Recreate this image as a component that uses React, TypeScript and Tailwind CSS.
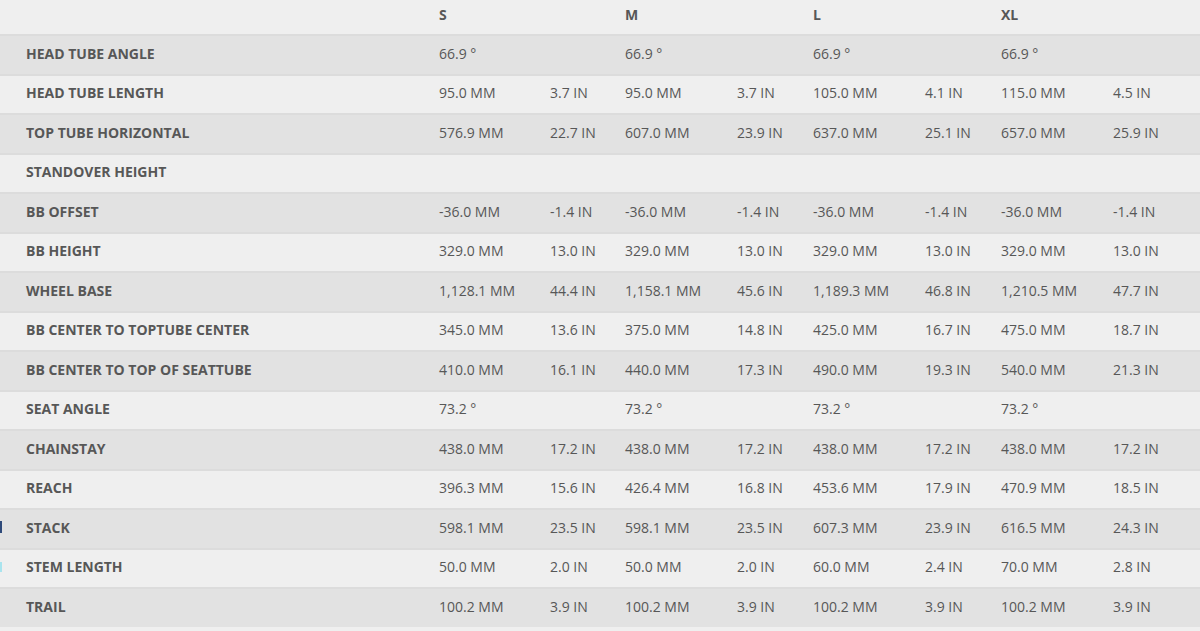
import React from 'react';

type Row = { label: string; values: (string | [string, string])[] };

const rows: Row[] = [
  { label: 'HEAD TUBE ANGLE', values: ['66.9 °', '66.9 °', '66.9 °', '66.9 °'] },
  { label: 'HEAD TUBE LENGTH', values: [['95.0 MM', '3.7 IN'], ['95.0 MM', '3.7 IN'], ['105.0 MM', '4.1 IN'], ['115.0 MM', '4.5 IN']] },
  { label: 'TOP TUBE HORIZONTAL', values: [['576.9 MM', '22.7 IN'], ['607.0 MM', '23.9 IN'], ['637.0 MM', '25.1 IN'], ['657.0 MM', '25.9 IN']] },
  { label: 'STANDOVER HEIGHT', values: ['', '', '', ''] },
  { label: 'BB OFFSET', values: [['-36.0 MM', '-1.4 IN'], ['-36.0 MM', '-1.4 IN'], ['-36.0 MM', '-1.4 IN'], ['-36.0 MM', '-1.4 IN']] },
  { label: 'BB HEIGHT', values: [['329.0 MM', '13.0 IN'], ['329.0 MM', '13.0 IN'], ['329.0 MM', '13.0 IN'], ['329.0 MM', '13.0 IN']] },
  { label: 'WHEEL BASE', values: [['1,128.1 MM', '44.4 IN'], ['1,158.1 MM', '45.6 IN'], ['1,189.3 MM', '46.8 IN'], ['1,210.5 MM', '47.7 IN']] },
  { label: 'BB CENTER TO TOPTUBE CENTER', values: [['345.0 MM', '13.6 IN'], ['375.0 MM', '14.8 IN'], ['425.0 MM', '16.7 IN'], ['475.0 MM', '18.7 IN']] },
  { label: 'BB CENTER TO TOP OF SEATTUBE', values: [['410.0 MM', '16.1 IN'], ['440.0 MM', '17.3 IN'], ['490.0 MM', '19.3 IN'], ['540.0 MM', '21.3 IN']] },
  { label: 'SEAT ANGLE', values: ['73.2 °', '73.2 °', '73.2 °', '73.2 °'] },
  { label: 'CHAINSTAY', values: [['438.0 MM', '17.2 IN'], ['438.0 MM', '17.2 IN'], ['438.0 MM', '17.2 IN'], ['438.0 MM', '17.2 IN']] },
  { label: 'REACH', values: [['396.3 MM', '15.6 IN'], ['426.4 MM', '16.8 IN'], ['453.6 MM', '17.9 IN'], ['470.9 MM', '18.5 IN']] },
  { label: 'STACK', values: [['598.1 MM', '23.5 IN'], ['598.1 MM', '23.5 IN'], ['607.3 MM', '23.9 IN'], ['616.5 MM', '24.3 IN']] },
  { label: 'STEM LENGTH', values: [['50.0 MM', '2.0 IN'], ['50.0 MM', '2.0 IN'], ['60.0 MM', '2.4 IN'], ['70.0 MM', '2.8 IN']] },
  { label: 'TRAIL', values: [['100.2 MM', '3.9 IN'], ['100.2 MM', '3.9 IN'], ['100.2 MM', '3.9 IN'], ['100.2 MM', '3.9 IN']] },
];

const cols = 'grid grid-cols-[439px_111px_75px_112px_76px_112px_76px_112px_87px] items-center';

const App: React.FC = () => {
  return (
    <div
      className="w-[1200px] h-[631px] overflow-hidden bg-[#efefef] text-[14px] text-[#575757]"
      style={{ fontFamily: '"Open Sans", "Liberation Sans", sans-serif' }}
    >
      {/* size header */}
      <div className={`${cols} h-[34px] pb-[6px] font-bold`}>
        <div />
        <div>S</div>
        <div />
        <div>M</div>
        <div />
        <div>L</div>
        <div />
        <div>XL</div>
        <div />
      </div>

      {rows.map((row, i) => (
        <div
          key={row.label}
          className={`${cols} h-[39.5px] pb-[3px] border-t-2 border-[#dcdcdc] ${i % 2 === 0 ? 'bg-[#e2e2e2]' : 'bg-[#efefef]'}`}
        >
          <div className="flex items-center font-bold">
            {row.label === 'STACK' && <span className="mr-[24px] h-[12px] w-[2px] bg-[#2f4a7a]" />}
            {row.label === 'STEM LENGTH' && <span className="mr-[24px] h-[10px] w-[2px] bg-[#a9e4ee]" />}
            {row.label !== 'STACK' && row.label !== 'STEM LENGTH' && <span className="w-[26px]" />}
            {row.label}
          </div>
          {row.values.map((v, j) =>
            Array.isArray(v) ? (
              <React.Fragment key={j}>
                <div>{v[0]}</div>
                <div>{v[1]}</div>
              </React.Fragment>
            ) : (
              <React.Fragment key={j}>
                <div>{v}</div>
                <div />
              </React.Fragment>
            )
          )}
        </div>
      ))}
    </div>
  );
};

export default App;
